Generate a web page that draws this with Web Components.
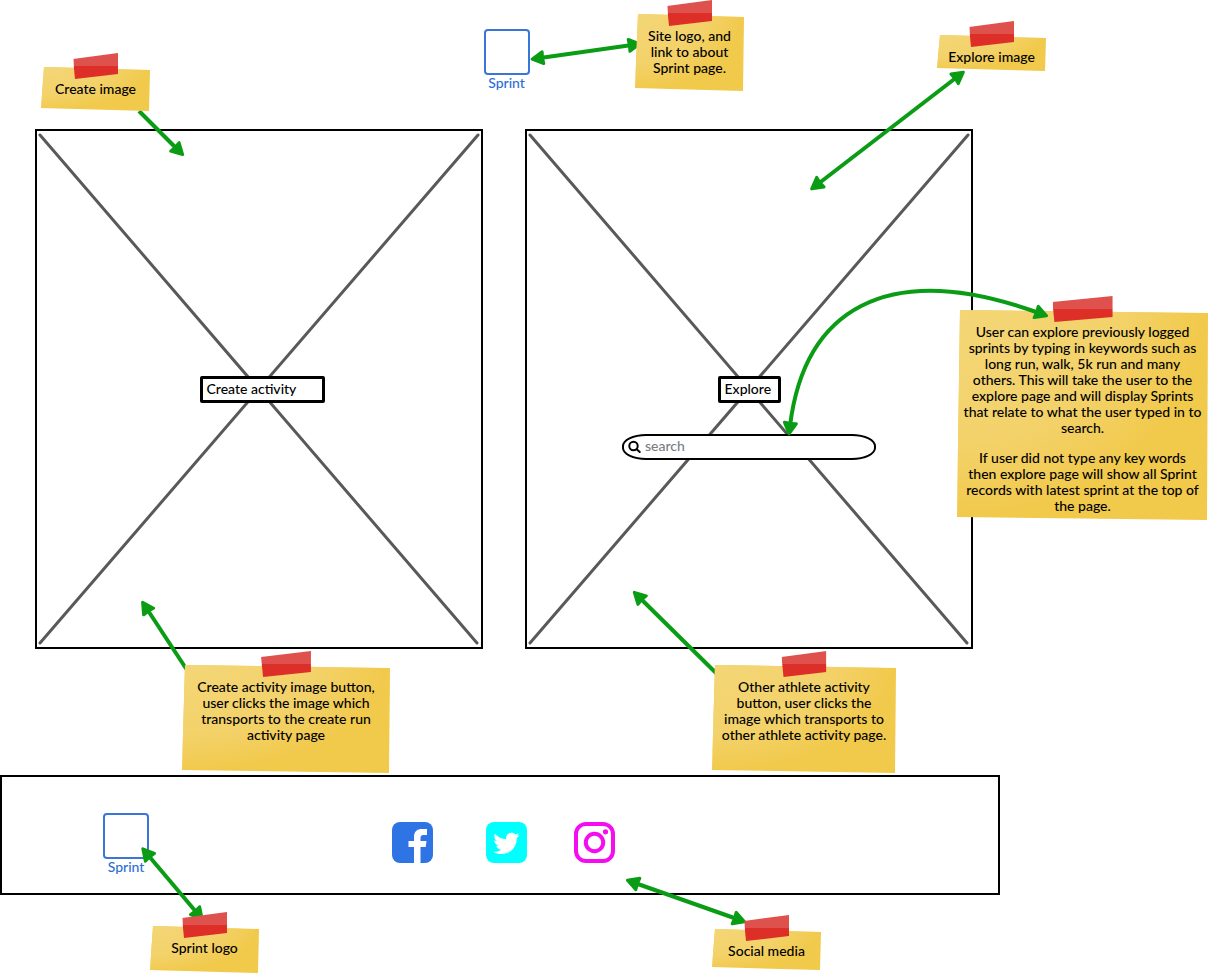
<!DOCTYPE html>
<html lang="en">
<head>
<meta charset="utf-8">
<title>Sprint wireframe</title>
<style>
  body { margin: 0; background: #fff; color: #000; font: 500 14px/16px Lato, "Liberation Sans", Arial, sans-serif; }
</style>
</head>
<body>
<sprint-wireframe></sprint-wireframe>

<script>
const define = (name, html, setup) => {
  const template = document.createElement('template');
  template.innerHTML = html;
  customElements.define(name, class extends HTMLElement {
    constructor() {
      super();
      this.attachShadow({ mode: 'open' }).append(template.content.cloneNode(true));
    }
    connectedCallback() { if (setup) setup(this, this.shadowRoot); }
  });
};

// Square outline logo with its caption
define('sprint-logo', `
  <style>
    :host { display: block; }
    a { display: flex; flex-direction: column; align-items: center; width: 46px; color: #2c6fd6; text-decoration: none; }
    i { box-sizing: border-box; width: 46px; height: 46px; border: 2px solid #3a76d8; border-radius: 4px; }
  </style>
  <a href="#about"><i></i><slot></slot></a>`);

// Crossed image placeholder with controls in its middle
define('image-card', `
  <style>
    :host { display: grid; box-sizing: border-box; height: 520px; border: 2px solid #000; }
    svg, div { grid-area: 1 / 1; min-width: 0; min-height: 0; }
    svg { width: 100%; height: 100%; }
    div { position: relative; display: flex; flex-direction: column; align-items: center; gap: 31px; padding-top: 245px; }
  </style>
  <svg viewBox="0 0 444 516" preserveAspectRatio="none" fill="none" stroke="#595959" stroke-width="3" stroke-linecap="round" aria-hidden="true">
    <path d="M3 4L440 512M441 4L3 512"/>
  </svg>
  <div><slot></slot></div>`);

define('box-button', `
  <style>
    :host { display: block; }
    button { display: block; box-sizing: border-box; width: 100%; height: 27px; padding: 0 4px 2px; border: 3px solid #000; border-radius: 2px; background: #fff; color: #000; font: inherit; text-align: left; white-space: nowrap; }
  </style>
  <button type="button"><slot></slot></button>`);

define('search-field', `
  <style>
    :host { display: block; }
    label { display: flex; align-items: center; gap: 4px; box-sizing: border-box; height: 26px; padding: 0 16px 2px 4px; border: 2px solid #000; border-radius: 24px / 12px; background: #fff; }
    svg { flex: none; width: 13px; height: 13px; }
    input { flex: 1; min-width: 0; padding: 0; border: 0; outline: 0; background: none; font: inherit; }
    input::placeholder { color: #7d7d85; opacity: 1; }
  </style>
  <label>
    <svg viewBox="0 0 13 13" fill="none" stroke="#000" stroke-width="2" stroke-linecap="round" aria-hidden="true"><circle cx="5.5" cy="6" r="4.2"/><path d="M8.7 9.2L11.7 12"/></svg>
    <input type="text" placeholder="search" aria-label="search">
  </label>`);

// Yellow note with a strip of red tape across its top edge
define('sticky-note', `
  <style>
    :host { display: block; position: absolute; }
    .paper {
      box-sizing: border-box; height: 100%; padding: 14px 6px 6px; text-align: center;
      background:
        radial-gradient(ellipse at 0 0, #f4d677 0, #f3d26a 45%, transparent 70%),
        #f1c94b;
      clip-path: polygon(3px 0, 100% 3px, calc(100% - 1px) 100%, 0 calc(100% - 3px));
    }
    .tape {
      position: absolute; top: -14px; left: 50%; transform: translateX(-50%);
      width: 24%; min-width: 45px; height: 26px;
      background: linear-gradient(#de514c 50%, #dd2f28 50%);
      clip-path: polygon(0 6px, 100% 0, 100% 21px, 2px 100%);
    }
  </style>
  <div class="paper"><slot></slot></div>
  <div class="tape"></div>`);

const icons = {
  facebook: '<rect width="41" height="41" rx="8" fill="#2f74e4"/><path fill="#fff" d="M22 41V25h-5.500v-6H22v-4c0-5.500 3-8 8-8h5v6h-3.500c-2.200 0-3 1-3 3v3h6l-.8 6h-5.200v16z"/>',
  twitter: '<rect width="41" height="41" rx="8" fill="#0ff"/><g transform="translate(2 .4) scale(.082)"><path fill="#fff" d="M351.100 190.800c.2 2.800.2 5.700.2 8.500 0 86.700-66 186.600-186.600 186.600-37.200 0-71.700-10.800-100.700-29.400 5.300.6 10.400.8 15.800.8 30.700 0 58.900-10.400 81.400-28-28.800-.6-53-19.500-61.300-45.500 10.100 1.500 19.200 1.500 29.600-1.200-30-6.100-52.500-32.500-52.500-64.400v-.8c8.700 4.900 18.900 7.900 29.600 8.300a65.400 65.400 0 0 1-29.200-54.600c0-12.200 3.200-23.400 8.900-33.100 32.300 39.800 80.800 65.800 135.200 68.600-9.300-44.500 24-80.600 64-80.600 18.900 0 35.900 7.900 47.900 20.700 14.800-2.800 29-8.300 41.600-15.800-4.900 15.200-15.200 28-28.800 36.100 13.200-1.400 26-5.100 37.800-10.200-8.900 13.100-20.100 24.700-32.900 34z"/></g>',
  instagram: '<g fill="none" stroke="#f40df0" stroke-width="4"><rect x="2" y="2" width="37" height="37" rx="10"/><circle cx="20.5" cy="20.5" r="8.7"/></g><circle cx="31.500" cy="9.800" r="2.600" fill="#f40df0"/>'
};
define('social-link', `
  <style>
    :host { display: block; width: 41px; }
    a, svg { display: block; width: 41px; height: 41px; }
  </style>
  <a><svg viewBox="0 0 41 41" aria-hidden="true"></svg></a>`, (host, root) => {
  const name = host.getAttribute('name');
  const link = root.querySelector('a');
  link.href = '#' + name;
  link.setAttribute('aria-label', name);
  root.querySelector('svg').innerHTML = icons[name];
});

define('page-footer', `
  <style>
    :host { display: block; box-sizing: border-box; height: 120px; border: 2px solid #000; }
    footer { display: grid; grid-template-columns: 289px 1fr; padding: 36px 0 0 101px; }
    nav { display: grid; grid-template-columns: 94px 88px 1fr; padding-top: 9px; }
  </style>
  <footer>
    <sprint-logo>Sprint</sprint-logo>
    <nav aria-label="Social media">
      <social-link name="facebook"></social-link>
      <social-link name="twitter"></social-link>
      <social-link name="instagram"></social-link>
    </nav>
  </footer>`);

// Green connectors between the notes and what they describe
define('note-arrows', `
  <style>
    :host { display: block; position: absolute; top: 0; left: 0; pointer-events: none; }
    svg { display: block; width: 1208px; height: 973px; }
  </style>
  <svg viewBox="0 0 1208 973" fill="none" stroke="#0a9c14" stroke-width="4" aria-hidden="true">
    <defs>
      <marker id="head" viewBox="-18 -10 22 20" refX="-9" refY="0" markerUnits="userSpaceOnUse" markerWidth="22" markerHeight="20" orient="auto-start-reverse">
        <path d="M-1 0L-12 -6Q-11 0 -12 6Z" fill="#0a9c14" stroke="#0a9c14" stroke-width="3" stroke-linejoin="round"/>
      </marker>
    </defs>
  </svg>`, (host, root) => {
  const svg = root.querySelector('svg');
  for (const spec of host.getAttribute('paths').split(';')) {
    const path = document.createElementNS('http://www.w3.org/2000/svg', 'path');
    path.setAttribute('d', spec.trim());
    path.setAttribute('marker-end', 'url(#head)');
    if (!host.hasAttribute('single')) path.setAttribute('marker-start', 'url(#head)');
    svg.append(path);
  }
});

define('sprint-wireframe', `
  <style>
    :host { display: block; position: relative; padding-bottom: 78px; }
    header { display: flex; justify-content: center; box-sizing: border-box; height: 129px; padding: 29px 195px 0 0; }
    main { display: grid; grid-template-columns: 1fr 1fr; gap: 42px; padding: 0 235px 0 35px; }
    .create { width: 125px; padding-left: 6px; }
    .explore { width: 63px; }
    search-field { width: 254px; }
    page-footer { margin: 126px 208px 0 0; }
    p { margin: 0 0 14px; }
    p:last-child { margin: 0; }
  </style>
  <header><sprint-logo>Sprint</sprint-logo></header>
  <main>
    <image-card><box-button class="create">Create activity</box-button></image-card>
    <image-card>
      <box-button class="explore">Explore</box-button>
      <search-field></search-field>
    </image-card>
  </main>
  <page-footer></page-footer>

  <sticky-note style="left:957px;top:310px;width:251px;height:210px">
    <p>User can explore previously logged<br>sprints by typing in keywords such as<br>long run, walk, 5k run and many<br>others. This will take the user to the<br>explore page and will display Sprints<br>that relate to what the user typed in to<br>search.</p>
    <p>If user did not type any key words<br>then explore page will show all Sprint<br>records with latest sprint at the top of<br>the page.</p>
  </sticky-note>

  <note-arrows single paths="M139 111L177 149; M187 670L147 609; M717 674L640 598"></note-arrows>
  <note-arrows paths="M540 58L632 45; M957 77L818 184; M790 426C804 312 884 257 1039 313; M148 855L197 913; M635 883L737 919"></note-arrows>

  <sticky-note style="left:41px;top:67px;width:109px;height:44px">Create image</sticky-note>
  <sticky-note style="left:635px;top:14px;width:109px;height:77px">Site logo, and<br>link to about<br>Sprint page.</sticky-note>
  <sticky-note style="left:937px;top:35px;width:109px;height:36px">Explore image</sticky-note>
  <sticky-note style="left:182px;top:665px;width:208px;height:108px">Create activity image button,<br>user clicks the image which<br>transports to the create run<br>activity page</sticky-note>
  <sticky-note style="left:712px;top:665px;width:184px;height:108px">Other athlete activity<br>button, user clicks the<br>image which transports to<br>other athlete activity page.</sticky-note>
  <sticky-note style="left:150px;top:926px;width:109px;height:47px">Sprint logo</sticky-note>
  <sticky-note style="left:712px;top:929px;width:109px;height:41px">Social media</sticky-note>`);
</script>
</body>
</html>
